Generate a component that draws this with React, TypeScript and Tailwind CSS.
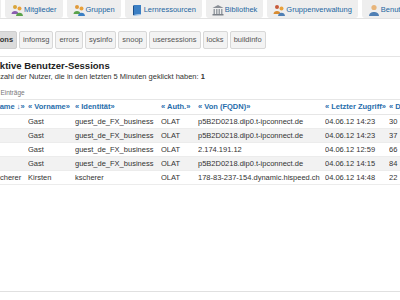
import React from "react";

type Tab = { label: string; icon: React.ReactNode };

function People({ a, b, c }: { a: string; b: string; c: string }) {
  return (
    <svg width="12" height="12" viewBox="0 0 12 12">
      <circle cx="4" cy="3" r="2" fill={a} />
      <path d="M0.5 10 C0.5 6 7.5 6 7.5 10 Z" fill={b} />
      <circle cx="8.5" cy="4.5" r="2" fill="#e9a23b" />
      <path d="M5 12 C5 7.5 12 7.5 12 12 Z" fill={c} />
    </svg>
  );
}

function Book() {
  return (
    <svg width="12" height="12" viewBox="0 0 12 12">
      <path d="M3 1 L10 1 L10 10 L3 11 Z" fill="#3b7fc4" />
      <path d="M2 2 L3 1 L3 11 L2 11.5 Z" fill="#1d4f8a" />
      <path d="M3 11 L10 10 L10 11 L3 12 Z" fill="#9cc2e8" />
    </svg>
  );
}

function Bank() {
  return (
    <svg width="12" height="12" viewBox="0 0 12 12">
      <path d="M6 1 L11.5 4 L0.5 4 Z" fill="#8a8f96" />
      <rect x="1.5" y="5" width="1.5" height="5" fill="#9aa0a6" />
      <rect x="4" y="5" width="1.5" height="5" fill="#9aa0a6" />
      <rect x="6.5" y="5" width="1.5" height="5" fill="#9aa0a6" />
      <rect x="9" y="5" width="1.5" height="5" fill="#9aa0a6" />
      <rect x="0.5" y="10" width="11" height="1.5" fill="#7b8087" />
    </svg>
  );
}

function Person() {
  return (
    <svg width="12" height="12" viewBox="0 0 12 12">
      <circle cx="6" cy="3.5" r="2.6" fill="#e8b57a" />
      <path d="M1 12 C1 6.5 11 6.5 11 12 Z" fill="#4f7fb4" />
    </svg>
  );
}

const tabs: Tab[] = [
  { label: "Mitglieder", icon: <People a="#d9a53a" b="#8a5db0" c="#5aa34a" /> },
  { label: "Gruppen", icon: <People a="#e09a3a" b="#5aa34a" c="#3b7fc4" /> },
  { label: "Lernressourcen", icon: <Book /> },
  { label: "Bibliothek", icon: <Bank /> },
  { label: "Gruppenverwaltung", icon: <People a="#c65a3a" b="#d98b2f" c="#4f7fb4" /> },
  { label: "Benutzer", icon: <Person /> },
];

const subTabs = ["sessions", "infomsg", "errors", "sysinfo", "snoop", "usersessions", "locks", "buildinfo"];

const rows = [
  ["", "Gast", "guest_de_FX_business", "OLAT", "p5B2D0218.dip0.t-ipconnect.de", "04.06.12 14:23", "30"],
  ["", "Gast", "guest_de_FX_business", "OLAT", "p5B2D0218.dip0.t-ipconnect.de", "04.06.12 14:23", "37"],
  ["", "Gast", "guest_de_FX_business", "OLAT", "2.174.191.12", "04.06.12 12:59", "66"],
  ["", "Gast", "guest_de_FX_business", "OLAT", "p5B2D0218.dip0.t-ipconnect.de", "04.06.12 14:15", "84"],
  ["Scherer", "Kirsten", "kscherer", "OLAT", "178-83-237-154.dynamic.hispeed.ch", "04.06.12 14:48", "22"],
];

const headers = ["« Name ↓»", "« Vorname»", "« Identität»", "« Auth.»", "« Von (FQDN)»", "« Letzter Zugriff»", "« Dauer»"];
const widths = ["w-[40px]", "w-[47px]", "w-[86px]", "w-[37px]", "w-[127px]", "w-[64px]", "w-[80px]"];

export default function App() {
  return (
    <div className="h-[300px] w-[400px] overflow-hidden bg-white font-['Liberation_Sans',Arial,sans-serif] text-[#333]">
      <div className="flex h-[19px] gap-[4px] overflow-hidden border-b border-[#e2e2e2]">
        <div className="-mt-[4px] h-[22px] w-[1px] shrink-0 rounded-br-[3px] bg-[#eeeeee]" />
        {tabs.map((t) => (
          <div
            key={t.label}
            className="-mt-[4px] flex h-[22px] shrink-0 items-center gap-[1px] rounded-[3px] bg-[#eeeeee] px-[6px] pt-[5px] text-[7.5px] text-[#2466a1]"
          >
            {t.icon}
            <span>{t.label}</span>
          </div>
        ))}
      </div>

      <div className="border-b border-[#e4e4e4] pb-[7px] pt-[12px]">
        <div className="-ml-[23px] flex gap-[2px]">
          {subTabs.map((s, i) => (
            <div
              key={s}
              className={
                i === 0
                  ? "flex h-[18px] shrink-0 items-center rounded-[2px] border border-[#cfcfcf] bg-[#dcdcdc] px-[3px] text-[7.5px] font-bold text-[#333]"
                  : "flex h-[18px] shrink-0 items-center rounded-[2px] border border-[#d8d8d8] bg-[#f3f3f3] px-[3px] text-[7.5px] text-[#555]"
              }
            >
              {s}
            </div>
          ))}
        </div>
      </div>

      <h2 className="-ml-[7px] mt-[3px] whitespace-nowrap text-[9.5px] font-bold leading-[12px] text-[#222]">
        Aktive Benutzer-Sessions
      </h2>
      <p className="-ml-[9px] whitespace-nowrap text-[7.5px] leading-[10px]">
        Anzahl der Nutzer, die in den letzten 5 Minuten geklickt haben: <b>1</b>
      </p>
      <p className="-ml-[5px] mt-[7px] whitespace-nowrap text-[6.5px] leading-[8px] text-[#777]">5 Einträge</p>

      <div className="mt-[2px] border-b border-[#e0e0e0] pb-[106px]">
        <table className="-ml-[12px] w-[481px] table-fixed border-collapse whitespace-nowrap text-[7.5px]">
          <thead>
            <tr className="h-[15px] border-t border-b border-[#e6e6e6]">
              {headers.map((h, i) => (
                <th key={h} className={`${widths[i]} overflow-hidden p-0 pb-[1px] text-left font-bold text-[#1f6dab]`}>
                  {h}
                </th>
              ))}
            </tr>
          </thead>
          <tbody className="text-[#333]">
            {rows.map((r, ri) => (
              <tr
                key={ri}
                className={
                  ri % 2 === 1
                    ? "h-[13.5px] border-b border-[#ececec] bg-[#f2f2f2]"
                    : "h-[13.5px] border-b border-[#ececec] bg-white"
                }
              >
                {r.map((c, ci) => (
                  <td
                    key={ci}
                    className={
                      ci === 0
                        ? "overflow-hidden p-0 pl-[7px] leading-[13px] text-[#333]"
                        : "overflow-hidden p-0 leading-[13px] text-[#333]"
                    }
                  >
                    {c}
                  </td>
                ))}
              </tr>
            ))}
          </tbody>
        </table>
      </div>
    </div>
  );
}
